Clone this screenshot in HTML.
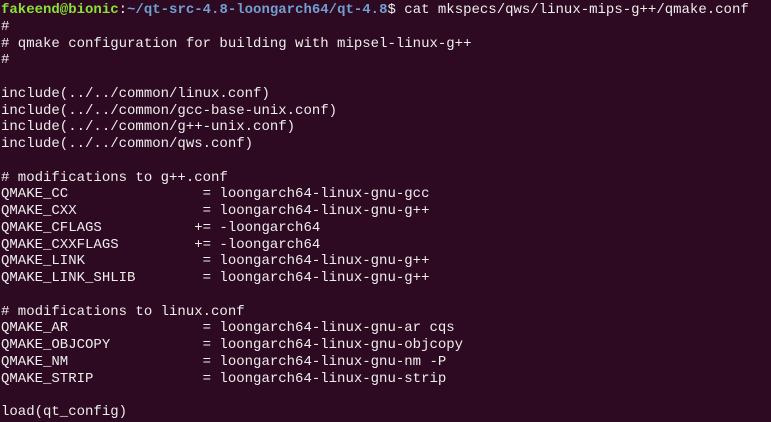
<!DOCTYPE html>
<html><head><meta charset="utf-8"><style>
html,body{margin:0;padding:0;background:#2d0922;width:771px;height:422px;overflow:hidden}
pre{margin:0;padding:2px 0 0 1px;font-family:"Liberation Mono","DejaVu Sans Mono",monospace;font-size:14px;line-height:16.75px;color:#eeeeec;white-space:pre}
.g{color:#8ae234;font-weight:bold}.b{color:#729fcf;font-weight:bold}
</style></head><body><pre><span class="g">fakeend@bionic</span>:<span class="b">~/qt-src-4.8-loongarch64/qt-4.8</span>$ cat mkspecs/qws/linux-mips-g++/qmake.conf
#
# qmake configuration for building with mipsel-linux-g++
#

include(../../common/linux.conf)
include(../../common/gcc-base-unix.conf)
include(../../common/g++-unix.conf)
include(../../common/qws.conf)

# modifications to g++.conf
QMAKE_CC                = loongarch64-linux-gnu-gcc
QMAKE_CXX               = loongarch64-linux-gnu-g++
QMAKE_CFLAGS           += -loongarch64
QMAKE_CXXFLAGS         += -loongarch64
QMAKE_LINK              = loongarch64-linux-gnu-g++
QMAKE_LINK_SHLIB        = loongarch64-linux-gnu-g++

# modifications to linux.conf
QMAKE_AR                = loongarch64-linux-gnu-ar cqs
QMAKE_OBJCOPY           = loongarch64-linux-gnu-objcopy
QMAKE_NM                = loongarch64-linux-gnu-nm -P
QMAKE_STRIP             = loongarch64-linux-gnu-strip

load(qt_config)
</pre></body></html>
